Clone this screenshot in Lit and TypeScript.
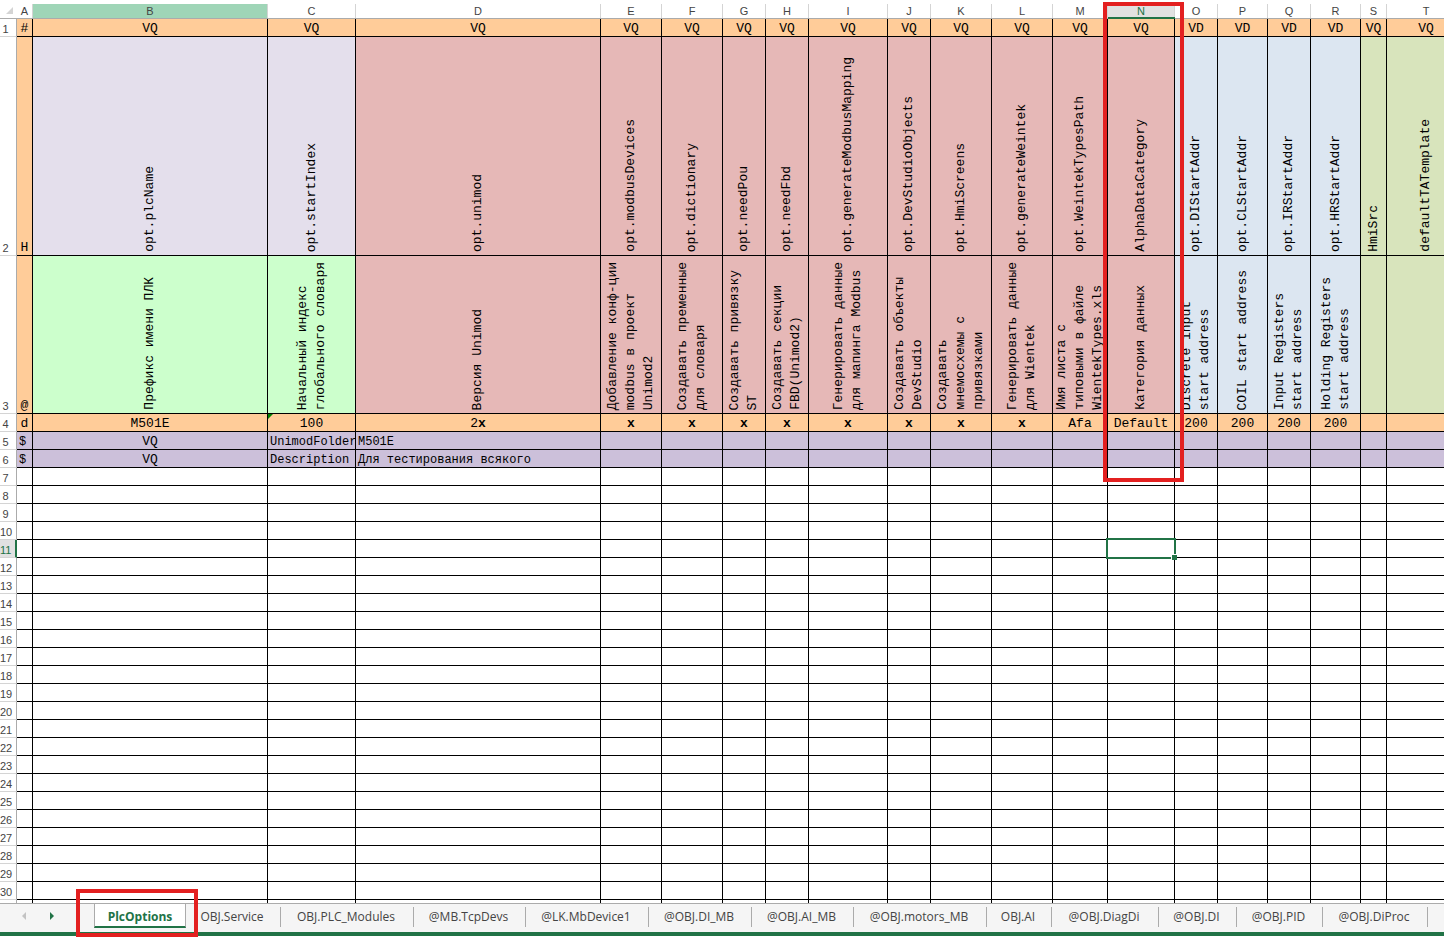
import { LitElement, html, css, nothing } from "lit";
import { customElement, property, state } from "lit/decorators.js";
import { classMap } from "lit/directives/class-map.js";
import { styleMap } from "lit/directives/style-map.js";

interface Column {
  id: string;
  width: number;
  tone: string;
  labelTone?: string;
  kind: string;
  name: string;
  label: string[];
  value: string;
}

const COLUMNS: Column[] = [
  { id: "A", width: 16, tone: "orange", kind: "#", name: "H", label: ["@"], value: "d" },
  { id: "B", width: 235, tone: "lilac", labelTone: "green", kind: "VQ", name: "opt.plcName", label: ["Префикс имени ПЛК"], value: "M501E" },
  { id: "C", width: 88, tone: "lilac", labelTone: "green", kind: "VQ", name: "opt.startIndex", label: ["Начальный индекс", "глобального словаря"], value: "100" },
  { id: "D", width: 245, tone: "rose", kind: "VQ", name: "opt.unimod", label: ["Версия Unimod"], value: "2x" },
  { id: "E", width: 61, tone: "rose", kind: "VQ", name: "opt.modbusDevices", label: ["Добавление конф-ции", "modbus в проект", "Unimod2"], value: "x" },
  { id: "F", width: 61, tone: "rose", kind: "VQ", name: "opt.dictionary", label: ["Создавать пременные", "для словаря"], value: "x" },
  { id: "G", width: 43, tone: "rose", kind: "VQ", name: "opt.needPou", label: ["Создавать привязку", "ST"], value: "x" },
  { id: "H", width: 43, tone: "rose", kind: "VQ", name: "opt.needFbd", label: ["Создавать секции", "FBD(Unimod2)"], value: "x" },
  { id: "I", width: 79, tone: "rose", kind: "VQ", name: "opt.generateModbusMapping", label: ["Генерировать данные", "для мапинга Modbus"], value: "x" },
  { id: "J", width: 43, tone: "rose", kind: "VQ", name: "opt.DevStudioObjects", label: ["Создавать объекты", "DevStudio"], value: "x" },
  { id: "K", width: 61, tone: "rose", kind: "VQ", name: "opt.HmiScreens", label: ["Создавать", "мнемосхемы с", "привязками"], value: "x" },
  { id: "L", width: 61, tone: "rose", kind: "VQ", name: "opt.generateWeintek", label: ["Генерировать данные", "для Wientek"], value: "x" },
  { id: "M", width: 55, tone: "rose", kind: "VQ", name: "opt.WeintekTypesPath", label: ["Имя листа с", "типовыми в файле", "WientekTypes.xls"], value: "Afa" },
  { id: "N", width: 67, tone: "rose", kind: "VQ", name: "AlphaDataCategory", label: ["Категория данных"], value: "Default" },
  { id: "O", width: 43, tone: "blue", kind: "VD", name: "opt.DIStartAddr", label: ["Discrete input", "start address"], value: "200" },
  { id: "P", width: 50, tone: "blue", kind: "VD", name: "opt.CLStartAddr", label: ["COIL start address"], value: "200" },
  { id: "Q", width: 43, tone: "blue", kind: "VD", name: "opt.IRStartAddr", label: ["Input Registers", "start address"], value: "200" },
  { id: "R", width: 50, tone: "blue", kind: "VD", name: "opt.HRStartAddr", label: ["Holding Registers", "start address"], value: "200" },
  { id: "S", width: 26, tone: "olive", kind: "VQ", name: "HmiSrc", label: [], value: "" },
  { id: "T", width: 79, tone: "olive", kind: "VQ", name: "defaultTATemplate", label: [], value: "" },
];

const ROW_HEADER_WIDTH = 17;

const PROPERTIES: Record<string, string>[] = [
  { A: "$", B: "VQ", C: "UnimodFolder", D: "M501E" },
  { A: "$", B: "VQ", C: "Description", D: "Для тестирования всякого" },
];

const FIRST_EMPTY_ROW = 7;
const LAST_ROW = 30;

@customElement("sheet-grid")
export class SheetGrid extends LitElement {
  @property({ type: String }) column = "N";
  @property({ type: Number }) row = 11;

  static styles = css`
    :host {
      display: block;
      overflow: hidden;
      background: #fff;
    }
    table {
      table-layout: fixed;
      border-collapse: separate;
      border-spacing: 0;
      min-width: 100%;
      font: 13px/15px "Liberation Mono", "Courier New", monospace;
      color: #000;
    }
    th,
    td {
      box-sizing: border-box;
      padding: 0;
      height: 18px;
      font-weight: 400;
      text-align: center;
      vertical-align: bottom;
      white-space: nowrap;
    }
    td {
      border-right: 1px solid #000;
      border-bottom: 1px solid #000;
    }
    th {
      font: 11px/14px "Liberation Sans", Arial, sans-serif;
      color: #444;
    }
    thead th {
      position: relative;
      height: 19px;
      border-bottom: 1px solid #ababab;
    }
    .letter {
      display: block;
      height: 14px;
      line-height: 15px;
      border-right: 1px solid #d4d4d4;
    }
    .hot .letter {
      background: #9fd5b7;
    }
    .current .letter {
      height: 13px;
      background: #e1e1e1;
      color: #217346;
    }
    thead .current {
      border-bottom: 2px solid #217346;
    }
    .corner svg {
      display: block;
      margin-left: 6px;
      margin-bottom: 3px;
    }
    tbody th {
      padding-right: 5px;
      border-right: 1px solid #ababab;
      border-bottom: 1px solid #d4d4d4;
    }
    tbody .current {
      background: #e1e1e1;
      color: #217346;
      border-right: 2px solid #217346;
      padding-right: 4px;
    }
    .names td {
      height: 219px;
    }
    .labels td {
      height: 158px;
    }
    .orange {
      background: #ffcc99;
    }
    .lilac {
      background: #e4dfec;
    }
    .green {
      background: #ccffcc;
    }
    .rose {
      background: #e6b8b7;
    }
    .blue {
      background: #dce6f1;
    }
    .olive {
      background: #d8e4bc;
    }
    .violet {
      background: #ccc0da;
    }
    .upright {
      display: inline-block;
      vertical-align: bottom;
      writing-mode: vertical-rl;
      transform: rotate(180deg);
      line-height: 18px;
      text-align: left;
      padding-top: 3px;
    }
    .mark {
      font-weight: 700;
    }
    .flagged {
      position: relative;
    }
    .flag {
      position: absolute;
      left: 0;
      top: 0;
    }
    .small {
      font-size: 12px;
      text-align: left;
      padding-left: 2px;
      line-height: 13px;
    }
    .active {
      position: relative;
    }
    .cursor {
      position: absolute;
      inset: -2px;
      border: 2px solid #217346;
      pointer-events: none;
    }
    .cursor::after {
      content: "";
      position: absolute;
      right: -3px;
      bottom: -3px;
      width: 5px;
      height: 5px;
      background: #217346;
      border: solid #fff;
      border-width: 1px 0 0 1px;
    }
    .outline {
      position: absolute;
      z-index: 2;
      box-sizing: border-box;
      top: 2px;
      left: -5px;
      right: -9px;
      height: 480px;
      border: 4px solid #e32020;
      pointer-events: none;
    }
  `;

  private renderValue(value: string) {
    if (!value.endsWith("x")) return value;
    return html`${value.slice(0, -1)}<span class="mark">x</span>`;
  }

  private renderUpright(lines: string[]) {
    if (!lines.length) return nothing;
    return html`<span class="upright"
      >${lines.map((line, i) => (i ? html`<br />${line}` : line))}</span
    >`;
  }

  private renderRowHeader(n: number) {
    return html`<th scope="row" class=${classMap({ current: n === this.row })}>${n}</th>`;
  }

  render() {
    const total = COLUMNS.reduce((sum, c) => sum + c.width, ROW_HEADER_WIDTH);
    const emptyRows = Array.from({ length: LAST_ROW - FIRST_EMPTY_ROW + 1 }, (_, i) => i + FIRST_EMPTY_ROW);
    return html`
      <table style=${styleMap({ width: `${total}px` })}>
        <colgroup>
          <col style=${styleMap({ width: `${ROW_HEADER_WIDTH}px` })} />
          ${COLUMNS.map((c) => html`<col style=${styleMap({ width: `${c.width}px` })} />`)}
        </colgroup>
        <thead>
          <tr>
            <th class="corner">
              <svg width="8" height="8" viewBox="0 0 8 8" aria-hidden="true"><path d="M7 0v7H0z" fill="#d4d4d4" /></svg>
            </th>
            ${COLUMNS.map(
              (c) => html`<th scope="col" class=${classMap({ hot: c.id === "B", current: c.id === this.column })}>
                <span class="letter">${c.id}</span>${c.id === this.column ? html`<span class="outline"></span>` : nothing}
              </th>`
            )}
          </tr>
        </thead>
        <tbody>
          <tr>
            ${this.renderRowHeader(1)}${COLUMNS.map((c) => html`<td class="orange">${c.kind}</td>`)}
          </tr>
          <tr class="names">
            ${this.renderRowHeader(2)}${COLUMNS.map(
              (c) => html`<td class=${c.tone}>${c.id === "A" ? c.name : this.renderUpright([c.name])}</td>`
            )}
          </tr>
          <tr class="labels">
            ${this.renderRowHeader(3)}${COLUMNS.map(
              (c) => html`<td class=${c.labelTone ?? c.tone}>${c.id === "A" ? c.label[0] : this.renderUpright(c.label)}</td>`
            )}
          </tr>
          <tr>
            ${this.renderRowHeader(4)}${COLUMNS.map(
              (c) => html`<td class=${classMap({ orange: true, flagged: c.id === "C" })}>
                ${c.id === "C"
                  ? html`<svg class="flag" width="5" height="5" viewBox="0 0 5 5" aria-hidden="true"><path d="M0 0h5L0 5z" fill="#008000" /></svg>`
                  : nothing}${this.renderValue(c.value)}
              </td>`
            )}
          </tr>
          ${PROPERTIES.map(
            (cells, i) => html`<tr>
              ${this.renderRowHeader(5 + i)}${COLUMNS.map(
                (c) => html`<td class=${classMap({ violet: true, small: c.id !== "B" })}>${cells[c.id] ?? nothing}</td>`
              )}
            </tr>`
          )}
          ${emptyRows.map(
            (n) => html`<tr>
              ${this.renderRowHeader(n)}${COLUMNS.map((c) => {
                const active = n === this.row && c.id === this.column;
                return html`<td class=${classMap({ active })}>${active ? html`<span class="cursor"></span>` : nothing}</td>`;
              })}
            </tr>`
          )}
          <tr aria-hidden="true">
            <th></th>
            ${COLUMNS.map(() => html`<td></td>`)}
          </tr>
        </tbody>
      </table>
    `;
  }
}

const TABS = [
  { name: "PlcOptions", width: 92 },
  { name: "OBJ.Service", width: 95 },
  { name: "OBJ.PLC_Modules", width: 133 },
  { name: "@MB.TcpDevs", width: 112 },
  { name: "@LK.MbDevice1", width: 123 },
  { name: "@OBJ.DI_MB", width: 103 },
  { name: "@OBJ.AI_MB", width: 102 },
  { name: "@OBJ.motors_MB", width: 133 },
  { name: "OBJ.AI", width: 65 },
  { name: "@OBJ.DiagDi", width: 107 },
  { name: "@OBJ.DI", width: 78 },
  { name: "@OBJ.PID", width: 86 },
  { name: "@OBJ.DiProc", width: 105 },
  { name: "@OBJ.AiProc", width: 105 },
];

@customElement("sheet-tabs")
export class SheetTabs extends LitElement {
  @state() private selected = "PlcOptions";

  static styles = css`
    :host {
      display: flex;
      box-sizing: border-box;
      height: 29px;
      border-top: 1px solid #ababab;
      background: #f5f5f5;
    }
    button {
      margin: 0;
      padding: 0;
      border: 0;
      background: none;
      color: #444;
      font: 12px/16px "Open Sans", "Noto Sans", sans-serif;
      white-space: nowrap;
    }
    .scroll {
      display: flex;
      flex: none;
      box-sizing: border-box;
      width: 94px;
      padding: 0 0 4px 15px;
      gap: 13px;
      align-items: center;
    }
    .scroll button {
      display: grid;
      place-items: center;
      width: 16px;
      height: 16px;
    }
    .tabs {
      display: flex;
      flex: 1;
      min-width: 0;
    }
    .slot {
      position: relative;
      flex: none;
      display: flex;
    }
    .tab {
      flex: 1;
      margin: 3px 2px 5px 0;
      margin-right: 0;
      padding-right: 2px;
      border-right: 1px solid #ababab;
    }
    .selected .tab {
      margin: 0 0 4px;
      padding: 3px 0 0;
      background: #fff;
      border: solid #ababab;
      border-width: 0 1px;
      border-bottom: 2px solid #217346;
      color: #217346;
      font-weight: 700;
    }
    .outline {
      position: absolute;
      z-index: 2;
      top: -15px;
      bottom: -5px;
      left: -18px;
      right: -12px;
      border: 4px solid #e32020;
      pointer-events: none;
    }
    .selected {
      z-index: 1;
    }
  `;

  render() {
    return html`
      <div class="scroll">
        <button type="button" aria-label="Previous sheets" disabled>
          <svg width="5" height="8" viewBox="0 0 5 8"><path d="M5 0v8L1 4z" fill="#c3c3c3" /></svg>
        </button>
        <button type="button" aria-label="Next sheets">
          <svg width="5" height="8" viewBox="0 0 5 8"><path d="M0 0v8l4-4z" fill="#217346" /></svg>
        </button>
      </div>
      <div class="tabs" role="tablist">
        ${TABS.map(
          (t) => html`<div
            class=${classMap({ slot: true, selected: t.name === this.selected })}
            role="presentation"
            style=${styleMap({ width: `${t.width}px` })}
          >
            <button
              class="tab"
              type="button"
              role="tab"
              aria-selected=${t.name === this.selected}
              @click=${() => (this.selected = t.name)}
            >
              ${t.name}
            </button>
            ${t.name === "PlcOptions" ? html`<span class="outline"></span>` : nothing}
          </div>`
        )}
      </div>
    `;
  }
}

@customElement("app-root")
export class AppRoot extends LitElement {
  static styles = css`
    :host {
      display: flex;
      flex-direction: column;
      height: 100vh;
      overflow: hidden;
      background: #fff;
    }
    sheet-grid {
      flex: 1;
      min-height: 0;
    }
    sheet-tabs {
      flex: none;
    }
    .status {
      flex: none;
      height: 4px;
      margin-bottom: 1px;
      background: #217346;
    }
  `;

  render() {
    return html`
      <sheet-grid column="N" row="11"></sheet-grid>
      <sheet-tabs></sheet-tabs>
      <div class="status"></div>
    `;
  }
}
